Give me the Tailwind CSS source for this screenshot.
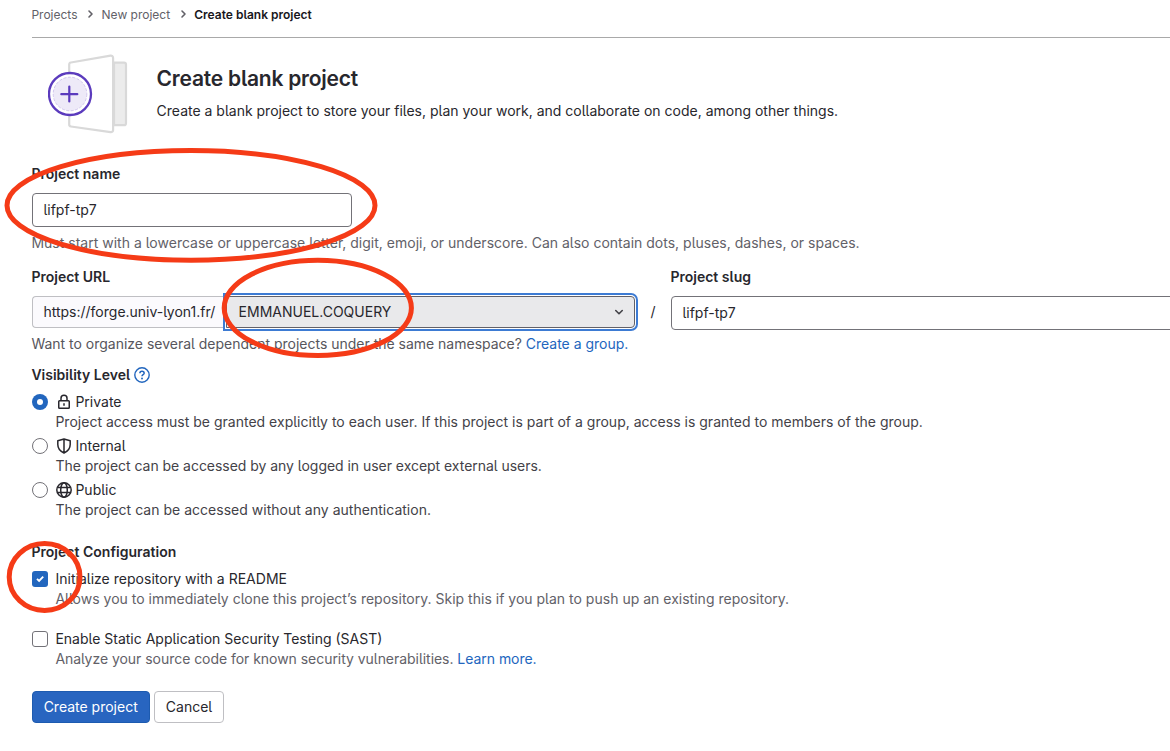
<!DOCTYPE html>
<html lang="en">
<head>
<meta charset="utf-8">
<title>Create blank project</title>
<script src="https://cdn.jsdelivr.net/npm/@tailwindcss/browser@4"></script>
</head>
<body class="relative h-[751px] w-[1170px] overflow-hidden bg-white pl-8 indent-[-0.6px] font-['Inter','Liberation_Sans',sans-serif] text-sm leading-5 text-[#28272d] [font-feature-settings:'cv05']">
<nav class="flex h-[38px] items-start border-b border-[#a9a9a9] pt-[5px] text-xs leading-5 text-[#626168]">
  <span>Projects</span>
  <svg class="mr-1.5 ml-[6.7px] mt-[3px] size-3" viewBox="0 0 12 12" fill="none" stroke="#626168" stroke-width="1.6" stroke-linecap="round" stroke-linejoin="round"><path d="M5 3l3 3-3 3"/></svg>
  <span>New project</span>
  <svg class="mr-1.5 ml-[6.7px] mt-[3px] size-3" viewBox="0 0 12 12" fill="none" stroke="#626168" stroke-width="1.6" stroke-linecap="round" stroke-linejoin="round"><path d="M5 3l3 3-3 3"/></svg>
  <span class="font-semibold text-[#18171d]">Create blank project</span>
</nav>
<header class="flex h-[126px] indent-[0.6px]">
  <svg class="ml-4 mt-4 h-20 w-20 shrink-0" viewBox="0 0 80 80" fill="none">
    <path d="M66 8.700h10a2 2 0 0 1 2 2v58.500a2 2 0 0 1-2 2H66z" fill="#ececec" stroke="#d9d9d9" stroke-width="2.200"/>
    <path d="M21.200 10.500a2 2 0 0 1 1.700-2L62.500 1.700a2.200 2.200 0 0 1 2.600 2.200v72a2.200 2.200 0 0 1-2.600 2.200L22.900 72.500a2 2 0 0 1-1.700-2z" fill="#fff" stroke="#d9d9d9" stroke-width="2.200"/>
    <circle cx="22" cy="40" r="21" fill="#fff" stroke="#5b3bbd" stroke-width="2.300"/>
    <circle cx="22" cy="40" r="16.800" fill="#eeeaf8" stroke="#c9bdea" stroke-width=".8" stroke-dasharray="3 1.500"/>
    <path d="M21.300 32.500v15M13.300 40.200h16" stroke="#5b3bbd" stroke-width="2.200" stroke-linecap="round"/>
  </svg>
  <div class="ml-7 pt-7">
    <h1 class="pt-px text-[21px] leading-6 font-semibold tracking-[-0.22px]">Create blank project</h1>
    <p class="mt-2.5">Create a blank project to store your files, plan your work, and collaborate on code, among other things.</p>
  </div>
</header>
<form>
  <label class="block font-semibold">Project name</label>
  <div class="mt-[9px] flex h-[34px] w-80 items-center rounded border border-[#737278] px-[11px]">lifpf-tp7</div>
  <p class="mt-1.5 tracking-[0.006px] text-[#626168]">Must start with a lowercase or uppercase letter, digit, emoji, or underscore. Can also contain dots, pluses, dashes, or spaces.</p>
  <div class="mt-3.5 flex">
    <div class="w-[606px] shrink-0">
      <label class="block font-semibold">Project URL</label>
      <div class="mt-[9px] flex h-8">
        <div class="flex w-[194px] items-center rounded-l border border-r-0 border-[#bfbfc3] bg-[#fbfafd] pl-[11px]"><span>https://forge.univ-lyon1.fr/</span></div>
        <div class="flex w-[409px] items-center justify-between rounded-r border border-[#626168] bg-[#e9e9eb] pr-[7px] pl-[11px] indent-[0.6px] shadow-[0_0_0_1px_#fff,0_0_0_3px_#3d7bd3]">
          <span>EMMANUEL.COQUERY</span>
          <svg class="size-4" viewBox="0 0 16 16" fill="none" stroke="#434248" stroke-width="1.600" stroke-linecap="round" stroke-linejoin="round"><path d="M4.750 6.500L8 9.750l3.250-3.250"/></svg>
        </div>
      </div>
      <p class="mt-1.5 tracking-[-0.01px] text-[#57565c]">Want to organize several dependent projects under the same namespace? <a class="text-[#2266be]">Create a group.</a></p>
    </div>
    <span class="mt-[35px] w-[33px] shrink-0 pl-[13px]">/</span>
    <div class="w-[510px] shrink-0">
      <label class="block font-semibold">Project slug</label>
      <div class="mt-[9px] flex h-[34px] items-center rounded border border-[#737278] px-[11px]">lifpf-tp7</div>
    </div>
  </div>
  <div class="mt-[11px] flex items-center gap-1 font-semibold">
    <span>Visibility Level</span>
    <svg class="size-4" viewBox="0 0 16 16" fill="none" stroke="#2266be" stroke-width="1.400"><circle cx="8" cy="8" r="7.200"/><path d="M5.900 6.300C5.900 5.100 6.800 4.300 8 4.300s2.150.750 2.150 1.850c0 1.450-2.150 1.500-2.150 3.100" stroke-width="1.500"/><circle cx="8" cy="11.500" r=".95" fill="#2266be" stroke="none"/></svg>
  </div>
  <div class="mt-[7px] flex flex-col gap-1">
    <div class="flex gap-2">
      <span class="mt-0.5 flex size-4 items-center justify-center rounded-full bg-[#2266be]"><span class="size-1.5 rounded-full bg-white"></span></span>
      <div>
        <div class="flex items-center gap-1"><svg class="size-4" viewBox="0 0 16 16" fill="none" stroke="#28272d" stroke-width="1.500"><rect x="2.750" y="6.750" width="10.500" height="7.500" rx=".8"/><path d="M5 6.500V4.300a3 3 0 0 1 6 0v2.200M8 9.300v2.400"/></svg><span>Private</span></div>
        <p class="tracking-[0.01px] text-[#434248]">Project access must be granted explicitly to each user. If this project is part of a group, access is granted to members of the group.</p>
      </div>
    </div>
    <div class="flex gap-2">
      <span class="mt-0.5 size-4 rounded-full border border-[#737278]"></span>
      <div>
        <div class="flex items-center gap-1"><svg class="size-4" viewBox="0 0 16 16" fill="none" stroke="#28272d" stroke-width="1.500" stroke-linejoin="round"><path d="M8 1L14.200 2.700V6.500C14.200 10.500 11.500 13.400 8 15 4.500 13.400 1.800 10.500 1.800 6.500V2.700zM8 1v14"/></svg><span>Internal</span></div>
        <p class="tracking-[-0.035px] text-[#434248]">The project can be accessed by any logged in user except external users.</p>
      </div>
    </div>
    <div class="flex gap-2">
      <span class="mt-0.5 size-4 rounded-full border border-[#737278]"></span>
      <div>
        <div class="flex items-center gap-1"><svg class="size-4" viewBox="0 0 16 16" fill="none" stroke="#28272d" stroke-width="1.500"><circle cx="8" cy="8" r="7.200"/><ellipse cx="8" cy="8" rx="3.300" ry="7.200"/><path d="M1.500 5.500h13M1.500 10.500h13"/></svg><span>Public</span></div>
        <p class="tracking-[0.02px] text-[#434248]">The project can be accessed without any authentication.</p>
      </div>
    </div>
  </div>
  <div class="mt-[22px] tracking-[0.02px] font-semibold">Project Configuration</div>
  <div class="mt-[7px] flex gap-2">
    <span class="mt-0.5 flex size-4 items-center justify-center rounded-[3px] bg-[#2266be]"><svg class="size-4" viewBox="0 0 16 16" fill="none" stroke="#fff" stroke-width="1.900"><path d="M5 7.800l2.100 2.100 4.100-4.300"/></svg></span>
    <div>
      <div class="tracking-[0.02px]">Initialize repository with a README</div>
      <p class="tracking-[0.01px] text-[#626168]">Allows you to immediately clone this project’s repository. Skip this if you plan to push up an existing repository.</p>
    </div>
  </div>
  <div class="mt-5 flex gap-2">
    <span class="mt-0.5 size-4 rounded-[3px] border border-[#737278]"></span>
    <div>
      <div>Enable Static Application Security Testing (SAST)</div>
      <p class="tracking-[-0.04px] text-[#626168]">Analyze your source code for known security vulnerabilities. <a class="text-[#2266be]">Learn more.</a></p>
    </div>
  </div>
  <div class="mt-[22px] flex gap-1">
    <div class="flex h-8 w-[118px] items-center justify-center rounded border border-[#1d5bb0] bg-[#2865c0] text-white">Create project</div>
    <div class="flex h-8 w-[70px] items-center justify-center rounded border border-[#bfbfc3] indent-0">Cancel</div>
  </div>
</form>
<svg class="pointer-events-none absolute inset-0 h-full w-full" viewBox="0 0 1170 751" fill="none" stroke="#f53b17" stroke-width="5">
  <ellipse cx="191" cy="205.400" rx="184" ry="54.800"/>
  <ellipse cx="317.800" cy="307.900" rx="93.600" ry="47.600"/>
  <ellipse cx="44.600" cy="577" rx="35.400" ry="33.400"/>
</svg>
</body>
</html>
